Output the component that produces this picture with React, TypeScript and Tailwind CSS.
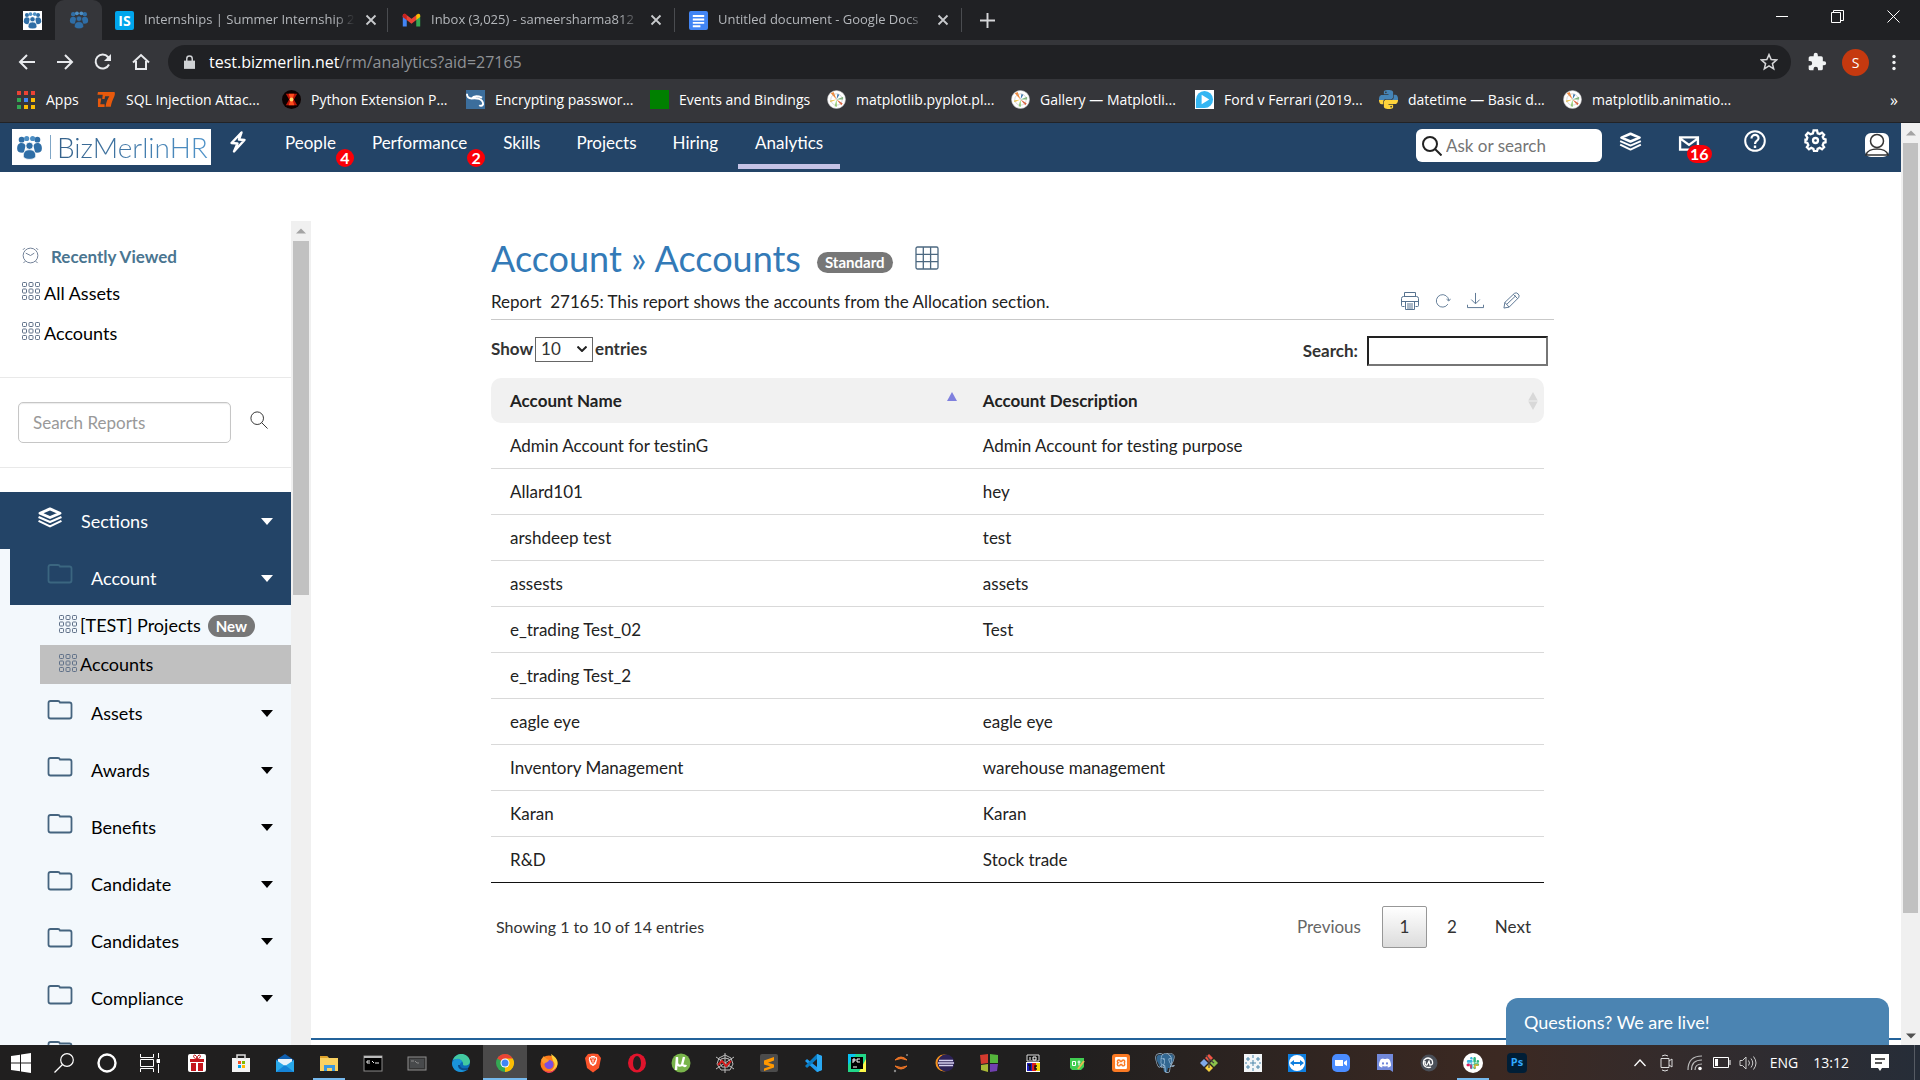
import React from "react";
import { SiPostgresql, SiDiscord, SiBrave, SiXampp, SiPython } from "react-icons/si";
import { FaSlack } from "react-icons/fa";

type IconProps = { className?: string };

/* ---------- brand marks ---------- */

function PeopleMark({ className }: IconProps) {
  return (
    <svg viewBox="0 0 24 24" className={className} fill="#2f6ea6" aria-hidden="true">
      <circle cx="5" cy="5" r="2.6" />
      <circle cx="19" cy="5" r="2.6" />
      <circle cx="9.5" cy="4" r="2.3" fill="#4d8fc4" />
      <circle cx="14.8" cy="4" r="2.3" fill="#4d8fc4" />
      <path d="M1 13c0-3.500 1.600-5 4-5 2 0 3 1 3.500 2.500L7 16.500C3 17 1 15.500 1 13Z" />
      <path d="M23 13c0-3.500-1.600-5-4-5-2 0-3 1-3.500 2.500L17 16.500c4 .5 6-1 6-3.500Z" />
      <circle cx="12" cy="10.500" r="3.200" stroke="currentColor" strokeWidth=".7" />
      <path d="M6.500 19.500c0-4 2-5.500 5.500-5.500s5.500 1.500 5.500 5.500c0 2-2.500 3-5.500 3s-5.500-1-5.500-3Z" stroke="currentColor" strokeWidth=".7" />
    </svg>
  );
}

function GmailMark({ className }: IconProps) {
  return (
    <svg viewBox="0 0 24 24" className={className} aria-hidden="true">
      <path d="M1 6v13.500h5V10L1 6Z" fill="#4285f4" />
      <path d="M23 6v13.500h-5V10l5-4Z" fill="#34a853" />
      <path d="M1 6c0-2 2-3 3.500-2L12 9.700 19.500 4 18 11.500l-6 4.500-6-4.500-5-4V6Z" fill="#ea4335" />
      <path d="M18 5v6.500l5-4V6c0-2-2-3-3.500-2L18 5Z" fill="#fbbc04" />
      <path d="M1 7.500 6 11.500V5L4.500 4C3 3 1 4 1 6v1.500Z" fill="#c5221f" />
    </svg>
  );
}

function DocsMark({ className }: IconProps) {
  return (
    <svg viewBox="0 0 20 20" className={className} aria-hidden="true">
      <rect width="20" height="20" rx="2" fill="#4285f4" />
      <path d="M4 5.200h12M4 9h12M4 12.500h12M4 16h8" stroke="#fff" strokeWidth="2" />
    </svg>
  );
}

function MatplotMark({ className }: IconProps) {
  return (
    <svg viewBox="0 0 20 20" className={className} aria-hidden="true">
      <circle cx="10" cy="10" r="9.500" fill="#fff" stroke="#bbb" strokeWidth=".6" />
      <path d="M10 10 4 3.500l3-1.500Z" fill="#f08a3c" />
      <path d="m10 10 7-3v3Z" fill="#7db87a" />
      <path d="m10 10 5 6 1.500-2Z" fill="#e0603a" />
      <path d="m10 10-7 1 .5 2Z" fill="#f1c64c" />
      <path d="m10 10-2 7 2.500.500Z" fill="#8fce6a" />
      <path d="m10 10 1-6 2 1Z" fill="#3a78b0" />
      <circle cx="10" cy="10" r="6" fill="none" stroke="#aaa" strokeWidth=".5" />
    </svg>
  );
}

function SqlMark({ className }: IconProps) {
  return (
    <svg viewBox="0 0 20 20" className={className} fill="#e8590c" aria-hidden="true">
      <path d="M1 2h17.500c1.500 4-2.500 7-4 15.500H9C9.500 13 11 9.500 13 6.500H8.500L8 9.500H5.500L6 5H.5Z" />
      <path d="M1 9h3.500l-1 6H8v3H1Z" />
    </svg>
  );
}

function PyExtMark({ className }: IconProps) {
  return (
    <svg viewBox="0 0 20 20" className={className} aria-hidden="true">
      <circle cx="10" cy="10" r="10" fill="#0c0000" />
      <path d="M4 4h12l-3.500 6L16 16H4l3.500-6Z" fill="#b71408" />
      <path d="M7 4h6l-2 6 2 6H7l2-6Z" fill="#ff4a1c" />
      <circle cx="10" cy="10" r="2" fill="#ffd56b" />
    </svg>
  );
}

function EncryptMark({ className }: IconProps) {
  return (
    <svg viewBox="0 0 20 20" className={className} fill="none" stroke="#fff" aria-hidden="true">
      <rect width="20" height="20" fill="#3c6e9c" stroke="none" />
      <path d="M1 4c0 4 2 5 5 5 2-3 6-3 11-1M5 9c6-1 13 0 13 6-1 2-3 2-4 1" strokeWidth="2" />
    </svg>
  );
}

function PlayMark({ className }: IconProps) {
  return (
    <svg viewBox="0 0 20 20" className={className} aria-hidden="true">
      <rect width="20" height="20" fill="#fff" />
      <path d="M1 10a9 9 0 0 1 9-9 9 9 0 1 1 0 18H1Z" fill="#35b6f2" />
      <path d="M7 5v10l8-5Z" fill="#fff" />
    </svg>
  );
}

/* ---------- application icons ---------- */

function Layers({ className }: IconProps) {
  return (
    <svg viewBox="0 0 26 22" className={className} fill="none" stroke="currentColor" strokeWidth="2" strokeLinejoin="round" aria-hidden="true">
      <path d="M13 2 2.500 6.500l10.500 4.500 10.500-4.500Z" strokeWidth="3" />
      <path d="m1 10.500 12 5.300 12-5.300M1 14.500l12 5.800 12-5.800" strokeWidth="2.200" />
    </svg>
  );
}

function Nine({ className }: IconProps) {
  const spots = [1, 7.500, 14];
  return (
    <svg viewBox="0 0 18 18" className={className} fill="none" stroke="#5f7088" aria-hidden="true">
      {spots.map((y) => spots.map((x) => <rect key={`${x}-${y}`} x={x - 0.5} y={y - 0.5} width="4" height="4" rx=".8" />))}
    </svg>
  );
}

function Folder({ className }: IconProps) {
  return (
    <svg viewBox="0 0 26 20" className={className} fill="none" stroke="currentColor" strokeWidth="1.800" aria-hidden="true">
      <path d="M1.500 16.500V3q0-2 2-2H11q1.500 0 2 1.500h9.500q2 0 2 2v12q0 2-2 2h-19q-2 0-2-2Z" />
    </svg>
  );
}

function Caret({ className }: IconProps) {
  return (
    <svg viewBox="0 0 12 7" className={className} fill="currentColor" aria-hidden="true">
      <path d="M0 0h12L6 7Z" />
    </svg>
  );
}

function Magnifier({ className }: IconProps) {
  return (
    <svg viewBox="0 0 20 20" className={className} fill="none" stroke="currentColor" aria-hidden="true">
      <circle cx="8" cy="8" r="7" />
      <path d="m13 13 6.500 6.500" />
    </svg>
  );
}

/* ---------- browser ---------- */

function Tab({ icon, title }: { icon: React.ReactNode; title: string }) {
  return (
    <div className="flex h-10 w-[285px] shrink-0 items-center gap-[10px] pl-[13px] pr-3">
      {icon}
      <span className="flex-1 whitespace-nowrap text-[13px] text-[#b4b7bb] mask-r-from-90%">{title}</span>
      <button aria-label="Close tab" className="text-[#c8cacd]">
        <svg viewBox="0 0 12 12" className="size-3" fill="none" stroke="currentColor" strokeWidth="1.800"><path d="m1.500 1.500 9 9m0-9-9 9" /></svg>
      </button>
    </div>
  );
}

function TabRule() {
  return <span className="mr-px h-6 w-px shrink-0 bg-[#4a4c50]" />;
}

const bookmarks: { text: string; icon: React.ReactNode; width: string }[] = [
  { text: "SQL Injection Attac...", icon: <SqlMark className="size-[19px]" />, width: "w-[185px]" },
  { text: "Python Extension P...", icon: <PyExtMark className="size-[19px]" />, width: "w-[184px]" },
  { text: "Encrypting passwor...", icon: <EncryptMark className="size-[19px]" />, width: "w-[184px]" },
  { text: "Events and Bindings", icon: <span className="block size-[19px] bg-[#008000]" />, width: "w-[177px]" },
  { text: "matplotlib.pyplot.pl...", icon: <MatplotMark className="size-[19px]" />, width: "w-[184px]" },
  { text: "Gallery — Matplotli...", icon: <MatplotMark className="size-[19px]" />, width: "w-[184px]" },
  { text: "Ford v Ferrari (2019...", icon: <PlayMark className="size-[19px]" />, width: "w-[184px]" },
  {
    text: "datetime — Basic d...",
    icon: (
      <svg viewBox="0 0 24 24" className="size-[19px]" aria-hidden="true">
        <defs><linearGradient id="py" x2="0" y2="1"><stop offset=".5" stopColor="#4584b6" /><stop offset=".5" stopColor="#ffd43b" /></linearGradient></defs>
        <SiPython size={24} fill="url(#py)" />
      </svg>
    ),
    width: "w-[184px]",
  },
  { text: "matplotlib.animatio...", icon: <MatplotMark className="size-[19px]" />, width: "w-[184px]" },
];

function Browser() {
  const appColours = ["#ea4335", "#ea4335", "#ea4335", "#34a853", "#4285f4", "#fbbc04", "#34a853", "#fbbc04", "#fbbc04"];
  return (
    <div className="shrink-0 bg-[#35363a] font-['Open_Sans',sans-serif] text-white">
      <div className="flex h-10 items-center bg-[#202124]">
        <div className="flex h-10 w-[55px] shrink-0 items-center pl-[23px]">
          <span className="bg-white text-white"><PeopleMark className="size-[19px]" /></span>
        </div>
        <div className="flex h-10 w-[47px] shrink-0 items-center justify-center rounded-t-[9px] bg-[#35363a] text-[#35363a]">
          <PeopleMark className="size-[20px]" />
        </div>
        <Tab icon={<span className="flex size-[19px] shrink-0 items-center justify-center rounded-[2px] bg-[#00a5ec] text-[14px] font-bold text-white">IS</span>} title="Internships | Summer Internship 2" />
        <TabRule />
        <Tab icon={<GmailMark className="size-[19px] shrink-0" />} title="Inbox (3,025) - sameersharma812" />
        <TabRule />
        <Tab icon={<DocsMark className="size-[19px] shrink-0" />} title="Untitled document - Google Docs" />
        <TabRule />
        <button aria-label="New tab" className="ml-[17px] text-[#d5d6d8]">
          <svg viewBox="0 0 14 14" className="size-[15px]" stroke="currentColor" strokeWidth="1.800"><path d="M7 0v14M0 7h14" /></svg>
        </button>
        <div className="ml-auto flex items-center gap-[43px] pr-5 pb-2 text-white">
          <button aria-label="Minimize"><svg viewBox="0 0 12 12" className="size-3" stroke="currentColor"><path d="M0 6.500h12" /></svg></button>
          <button aria-label="Restore"><svg viewBox="0 0 13 13" className="size-[13px]" fill="none" stroke="currentColor"><path d="M.5 2.500h9v10h-9ZM2.500 2.500v-2h10v10h-3" /></svg></button>
          <button aria-label="Close"><svg viewBox="0 0 13 13" className="size-[13px]" stroke="currentColor"><path d="m.5.5 12 12m0-12-12 12" /></svg></button>
        </div>
      </div>

      <div className="flex h-11 items-center pr-[23px]">
        <div className="flex items-center gap-5 pl-[18px] text-[#e8eaed]">
          <button aria-label="Back"><svg viewBox="0 0 18 18" className="size-[18px]" fill="none" stroke="currentColor" strokeWidth="2"><path d="M17 9H2M9 2 2 9l7 7" /></svg></button>
          <button aria-label="Forward"><svg viewBox="0 0 18 18" className="size-[18px]" fill="none" stroke="currentColor" strokeWidth="2"><path d="M1 9h15M9 2l7 7-7 7" /></svg></button>
          <button aria-label="Reload"><svg viewBox="0 0 18 18" className="size-[18px]" fill="none" stroke="currentColor" strokeWidth="2"><path d="M15 11.500A7 7 0 1 1 14 4l1.500 1.700" /><path d="M17 1v7h-7Z" fill="currentColor" stroke="none" /></svg></button>
          <button aria-label="Home"><svg viewBox="0 0 18 18" className="size-[18px]" fill="none" stroke="currentColor" strokeWidth="2"><path d="M1 9.500 9 2l8 7.500M4 8v8h10V8" /></svg></button>
        </div>
        <div className="ml-[18px] flex h-[34px] flex-1 items-center rounded-full bg-[#202124] pl-4 pr-[13px]">
          <svg viewBox="0 0 12 15" className="mr-[14px] h-[14px] w-[11px]" fill="#d0d2d5" aria-hidden="true"><path d="M0 6h12v9H0Z" /><path d="M3 7V4a3 3 0 0 1 6 0v3" fill="none" stroke="#d0d2d5" strokeWidth="1.600" /></svg>
          <span className="flex-1 whitespace-nowrap text-[16px] text-white">test.bizmerlin.net<span className="text-[#8f9296]">/rm/analytics?aid=27165</span></span>
          <button aria-label="Bookmark"><svg viewBox="0 0 20 20" className="size-[18px]" fill="none" stroke="#d5d6d8" strokeWidth="1.700"><path d="m10 1.800 2.400 5.500 6 .5-4.600 4 1.400 5.800-5.200-3.200-5.200 3.200 1.400-5.800-4.600-4 6-.5Z" /></svg></button>
        </div>
        <button aria-label="Extensions" className="ml-4"><svg viewBox="0 0 24 24" className="size-5" fill="#f1f3f4"><path d="M20.500 11H19V7a2 2 0 0 0-2-2h-4V3.500a2.500 2.500 0 0 0-5 0V5H4a2 2 0 0 0-2 2v3.800h1.500a2.700 2.700 0 0 1 0 5.400H2V20a2 2 0 0 0 2 2h3.800v-1.500a2.700 2.700 0 0 1 5.400 0V22H17a2 2 0 0 0 2-2v-4h1.500a2.500 2.500 0 0 0 0-5Z" /></svg></button>
        <button className="ml-[15px] flex size-[27px] items-center justify-center rounded-full bg-[#c5390f] text-[14px]">S</button>
        <button aria-label="Menu" className="ml-[22px]"><svg viewBox="0 0 6 20" className="h-[17px] w-[6px]" fill="#f1f3f4"><circle cx="3" cy="3" r="2" /><circle cx="3" cy="10" r="2" /><circle cx="3" cy="17" r="2" /></svg></button>
      </div>

      <div className="flex h-[39px] items-center border-b border-[#222326] pb-[7px] pl-[17px] pr-[22px] text-[14px]">
        <a href="#apps" className="flex w-20 shrink-0 items-center gap-[11px]">
          <svg viewBox="0 0 18 18" className="size-[18px]" aria-hidden="true">{appColours.map((c, i) => <rect key={i} x={(i % 3) * 7} y={Math.floor(i / 3) * 7} width="4" height="4" fill={c} />)}</svg>
          <span>Apps</span>
        </a>
        {bookmarks.map((b) => (
          <a key={b.text} href="#bookmark" className={`flex shrink-0 items-center gap-[10px] whitespace-nowrap ${b.width}`}>
            {b.icon}
            <span>{b.text}</span>
          </a>
        ))}
        <button aria-label="More bookmarks" className="ml-auto text-[16px]">»</button>
      </div>
    </div>
  );
}

/* ---------- header ---------- */

const badge = "absolute flex h-[18px] min-w-[18px] items-center justify-center rounded-full bg-[#fb0007] px-[3px] text-[16px] font-bold leading-none text-white";

function Header() {
  return (
    <header className="flex h-[49px] shrink-0 items-start bg-[#234467] text-[17px] text-white">
      <a href="#home" className="ml-3 mt-[6px] flex h-9 w-[199px] shrink-0 items-center bg-white pl-1">
        <PeopleMark className="size-[27px]" />
        <span className="ml-[7px] h-6 w-px bg-[#7fa6c6]" />
        <span className="ml-[6px] bg-linear-to-r from-[#35618a] to-[#4f93c9] bg-clip-text text-[28px] font-light leading-9 text-transparent">BizMerlinHR</span>
      </a>
      <button aria-label="Quick actions" className="ml-[18px] mt-2">
        <svg viewBox="0 0 18 22" className="h-[22px] w-[18px]" fill="none" stroke="#fff" strokeWidth="2.400" strokeLinejoin="round"><path d="M12.500 1.500 2.500 12l6 .5L5 20.500 15.500 9l-5.500-.5Z" /></svg>
      </button>
      <nav className="ml-5 flex h-[46px] items-stretch leading-10">
        <a href="#people" className="relative px-[18px]">People<span className={`${badge} right-0 top-[26px]`}>4</span></a>
        <a href="#performance" className="relative px-[18px]">Performance<span className={`${badge} right-0 top-[26px]`}>2</span></a>
        <a href="#skills" className="px-[18px]">Skills</a>
        <a href="#projects" className="px-[18px]">Projects</a>
        <a href="#hiring" className="px-[18px]">Hiring</a>
        <a href="#analytics" className="ml-[2px] border-b-[5px] border-[#c5c3e6] px-[17px]">Analytics</a>
      </nav>
      <label className="ml-auto mt-[6px] flex h-[33px] w-[186px] items-center rounded-[6px] bg-white pl-[6px]">
        <Magnifier className="size-5 shrink-0 stroke-2 text-[#222]" />
        <input aria-label="Ask or search" placeholder="Ask or search" className="ml-1 w-full min-w-0 bg-transparent placeholder:text-[#757575] focus:outline-none" />
      </label>
      <div className="mr-3 flex items-start">
        <button aria-label="Layers" className="ml-[17px] mt-[9px]"><Layers className="h-[19px] w-[23px]" /></button>
        <button aria-label="Mail" className="relative ml-[36px] mt-[13px]">
          <svg viewBox="0 0 22 16" className="h-[15px] w-[22px]" fill="none" stroke="#fff" strokeWidth="2.500"><path d="M1.500 1.500h19v13h-19Zm0 1L11 9.500l9.500-7" /></svg>
          <span className={`${badge} left-[9px] top-[9px]`}>16</span>
        </button>
        <button aria-label="Help" className="ml-[44px] mt-[7px]">
          <svg viewBox="0 0 22 22" className="size-[22px]" fill="none" stroke="#fff" strokeWidth="2"><circle cx="11" cy="11" r="9.800" /><path d="M7.500 8.500c0-5 7.500-4.500 7 0-.2 2.500-3.500 2-3.500 5.500" strokeWidth="2.200" /><path d="M11 15.500V18" strokeWidth="2.400" /></svg>
        </button>
        <button aria-label="Settings" className="ml-[38px] mt-[6px]">
          <svg viewBox="0 0 24 24" className="size-[23px]" fill="none" stroke="#fff" strokeWidth="2.400"><path d="m10 1.500-.7 3-2.500 1-2.600-1.500L2 6.500l1.500 2.600L2.800 11H1.500v3l2 .5 1 2.400L3 19l2.200 2.200 2.400-1.500 2.200 1 .6 2.300h3.200l.6-2.300 2.200-1 2.400 1.500L21 19l-1.500-2.200 1-2.400 2-.4v-3.200l-2-.5-1-2.200L21 6l-2.200-2.200-2.500 1.500-2-.8-.7-3Z" /><circle cx="12" cy="12" r="2.600" /></svg>
        </button>
        <button aria-label="Profile" className="ml-[38px] mt-[10px]">
          <svg viewBox="0 0 24 24" className="size-6"><rect width="24" height="24" rx="6" fill="#fff" /><circle cx="12" cy="8" r="6.500" fill="none" stroke="#333" strokeWidth="1.500" /><path d="M1 22c2-8 20-8 22 0Z" fill="none" stroke="#333" strokeWidth="1.500" /></svg>
        </button>
      </div>
    </header>
  );
}

/* ---------- sidebar ---------- */

const folders = ["Assets", "Awards", "Benefits", "Candidate", "Candidates", "Compliance"];

function ScrollRail({ side }: { side?: boolean }) {
  return (
    <div className={side ? "flex w-5 shrink-0 flex-col items-center bg-[#f0f0f0]" : "flex w-[19px] shrink-0 flex-col items-center bg-[#f0f0f0]"} aria-hidden="true">
      <svg viewBox="0 0 10 5" className="my-[7px] h-[6px] w-[10px] shrink-0" fill="#a3a3a3"><path d="M5 0 10 5H0Z" /></svg>
      <div className={side ? "h-[43%] w-4 bg-[#c1c1c1]" : "h-[83.5%] w-[15px] bg-[#c1c1c1]"} />
      {!side && <svg viewBox="0 0 10 5" className="mb-[6px] mt-auto h-[6px] w-[10px]" fill="#505050"><path d="M0 0h10L5 5Z" /></svg>}
    </div>
  );
}

function Sidebar() {
  return (
    <aside className="mt-[49px] flex w-[311px] shrink-0 overflow-hidden text-[18px] text-black">
      <div className="flex min-w-0 flex-1 flex-col overflow-hidden">
        <section className="h-[157px] shrink-0 border-b border-[#e9e9e9] pl-[22px] pt-[22px]">
          <h2 className="flex h-7 items-center gap-3 text-[17px] font-bold text-[#4a7590]">
            <svg viewBox="0 0 18 18" className="mb-1 size-[17px]" fill="none" stroke="#6b7b93"><circle cx="9" cy="9" r="7.800" /><path d="M4 6.500 9 9l4-2.500M1 3 3 1m12 0 2 2M3.500 15 1.500 17m13-2 2 2" /></svg>
            Recently Viewed
          </h2>
          <a href="#all-assets" className="mt-[2px] flex h-10 items-center gap-1"><Nine className="mb-1 size-[18px]" />All Assets</a>
          <a href="#accounts" className="flex h-10 items-center gap-1"><Nine className="mb-1 size-[18px]" />Accounts</a>
        </section>
        <form className="flex h-[90px] shrink-0 items-center border-b border-[#e9e9e9] pl-[18px]">
          <input aria-label="Search Reports" placeholder="Search Reports" className="h-[41px] w-[213px] rounded-[5px] border border-[#c6c6c6] px-[14px] text-[17px] shadow-[inset_0_1px_1px_rgba(0,0,0,0.08)] placeholder:text-[#999]" />
          <button type="button" aria-label="Search" className="mb-[6px] ml-[19px]"><Magnifier className="size-[18px] text-[#222]" /></button>
        </form>
        <div className="mt-6 flex min-h-0 flex-1 flex-col bg-[#f3f8fc]">
          <button className="flex h-[57px] shrink-0 items-center bg-[#234467] pl-[37px] pr-[18px] pt-[2px] text-white">
            <Layers className="mb-2 h-[21px] w-[26px]" /><span className="ml-[18px]">Sections</span><Caret className="ml-auto h-[7px] w-3" />
          </button>
          <button className="ml-[10px] flex h-14 shrink-0 items-center bg-[#234467] pl-[37px] pr-[18px] pt-[2px] text-white">
            <Folder className="mb-2 h-5 w-[26px] text-[#3b6680]" /><span className="ml-[18px]">Account</span><Caret className="ml-auto h-[7px] w-3" />
          </button>
          <a href="#test-projects" className="flex h-10 shrink-0 items-center gap-[3px] pl-[59px]">
            <Nine className="mb-[2px] size-[18px]" />[TEST] Projects
            <span className="ml-1 mt-[2px] flex h-[22px] items-center rounded-full bg-[#777] px-2 text-[15px] font-bold text-white">New</span>
          </a>
          <a href="#accounts" className="ml-10 flex h-[39px] shrink-0 items-center gap-[3px] bg-[#c0c0c0] pl-[19px]"><Nine className="mb-1 size-[18px]" />Accounts</a>
          {folders.map((f) => (
            <button key={f} className="flex h-[57px] shrink-0 items-center pl-[47px] pr-[18px] pt-[2px]">
              <Folder className="mb-2 h-5 w-[26px] text-[#45647f]" /><span className="ml-[18px]">{f}</span><Caret className="ml-auto h-[7px] w-3" />
            </button>
          ))}
          <button aria-label="More sections" className="flex h-[57px] shrink-0 items-center pl-[47px]"><Folder className="mb-2 h-5 w-[26px] text-[#45647f]" /></button>
        </div>
      </div>
      <ScrollRail side />
    </aside>
  );
}

/* ---------- report ---------- */

const rows: [string, string][] = [
  ["Admin Account for testinG", "Admin Account for testing purpose"],
  ["Allard101", "hey"],
  ["arshdeep test", "test"],
  ["assests", "assets"],
  ["e_trading Test_02", "Test"],
  ["e_trading Test_2", ""],
  ["eagle eye", "eagle eye"],
  ["Inventory Management", "warehouse management"],
  ["Karan", "Karan"],
  ["R&D", "Stock trade"],
];

function Report() {
  return (
    <main className="relative flex min-w-0 flex-1 flex-col pl-[180px] pr-[347px] text-[17px] text-[#222] [font-variant-ligatures:none]">
      <div className="mt-[60px] flex h-[52px] items-center">
        <h1 className="text-[36px] leading-[50px] text-[#337ab7]">Account » Accounts</h1>
        <span className="ml-4 mt-[9px] flex h-[21px] items-center rounded-full bg-[#777] px-2 text-[15px] font-bold text-white">Standard</span>
        <button aria-label="Grid view" className="ml-[22px]">
          <svg viewBox="0 0 24 24" className="size-6" fill="none" stroke="#4c6880" strokeWidth="1.300"><rect x="1" y="1" width="22" height="22" rx="1.500" /><path d="M1 8.300h22M1 15.600h22M8.300 1v22M15.600 1v22" /></svg>
        </button>
      </div>
      <div className="flex h-[36px] items-center border-b border-[#c9c9c9] pr-[34px]">
        <p className="whitespace-pre">Report  27165: This report shows the accounts from the Allocation section.</p>
        <div className="ml-auto flex items-center gap-4 pb-[2px] text-[#56728f]">
          <button aria-label="Print"><svg viewBox="0 0 18 18" className="size-[18px]" fill="none" stroke="currentColor"><path d="M3.500 4.500v-4h11v4M3.500 14.500h-2q-1 0-1-1v-7q0-2 2-2h13q2 0 2 2v7q0 1-1 1h-2M1 9.500h16M4.500 9.500h9v8h-9ZM6 12h6m-6 2h6m-6 2h6" /></svg></button>
          <button aria-label="Refresh"><svg viewBox="0 0 18 18" className="size-4" fill="none" stroke="currentColor"><path d="M15.500 8.500a7 7 0 1 0-1 4M13 7l2.500 2L17.500 6.500" /></svg></button>
          <button aria-label="Download"><svg viewBox="0 0 18 18" className="size-[17px]" fill="none" stroke="currentColor"><path d="M9 1v11M4.500 8 9 12.500 13.500 8M.5 13.500v3h17v-3" /></svg></button>
          <button aria-label="Edit" className="ml-[3px]"><svg viewBox="0 0 18 18" className="size-[17px]" fill="none" stroke="currentColor"><path d="m1 17 1-6L12 1.500q2-1.500 4 .5t.5 4L6.500 16ZM2 11l4.500 5M11 2.500l4.500 4.500M4 13 13.500 4" /></svg></button>
        </div>
      </div>

      <div className="mt-4 mr-[6px] flex items-start font-bold text-[#333]">
        <label className="flex h-[26px] items-center gap-[2px]">
          Show
          <span className="relative">
            <select defaultValue="10" className="block h-[25px] w-[58px] appearance-none border border-[#666] bg-white pb-[2px] pl-[5px] font-normal leading-none"><option>10</option><option>25</option></select>
            <svg viewBox="0 0 10 6" className="pointer-events-none absolute right-[6px] top-[9px] h-[6px] w-[10px]" fill="none" stroke="#222" strokeWidth="2"><path d="m.5.5 4.500 4.500L9.500.5" /></svg>
          </span>
          entries
        </label>
        <label className="ml-auto flex h-[30px] items-center gap-[9px]">Search:<input type="search" className="h-[30px] w-[181px] border-2 border-b-[#767676] border-l-[#222] border-r-[#767676] border-t-[#222] px-1 font-normal" /></label>
      </div>

      <div className="mr-[10px] mt-3">
        <table className="w-full table-fixed border-separate border-spacing-0 border-b border-[#111] text-left">
          <colgroup><col className="w-[45%]" /><col /></colgroup>
          <thead>
            <tr className="h-[45px]">
              <th className="rounded-l-[10px] bg-[#f1f1f1] pl-[19px] pr-2 font-bold">
                <div className="flex items-center">Account Name<svg viewBox="0 0 10 9" className="mb-[9px] ml-auto h-[9px] w-[10px]" fill="#7f80de"><path d="m5 0 5 9H0Z" /></svg></div>
              </th>
              <th className="rounded-r-[10px] bg-[#f1f1f1] pl-[18px] pr-[6px] font-bold">
                <div className="flex items-center">Account Description<svg viewBox="0 0 10 19" className="ml-auto h-[18px] w-[10px]" fill="#d8d8d8"><path d="m5 0 5 9H0ZM0 10h10l-5 9Z" /></svg></div>
              </th>
            </tr>
          </thead>
          <tbody>
            {rows.map(([name, text], i) => (
              <tr key={name} className={i < 9 ? "h-[46px]" : "h-[45px]"}>
                <td className={i < 9 ? "border-b border-[#d9d9d9] pl-[19px]" : "pl-[19px]"}>{name}</td>
                <td className={i < 9 ? "border-b border-[#d9d9d9] pl-[18px]" : "pl-[18px]"}>{text}</td>
              </tr>
            ))}
          </tbody>
        </table>
        <div className="mt-[23px] flex h-[42px] items-center pl-[5px] pr-[13px] text-[#333]">
          <span className="text-[16px]">Showing 1 to 10 of 14 entries</span>
          <nav className="ml-auto flex items-center">
            <button className="text-[#666]">Previous</button>
            <button className="ml-[21px] h-[42px] w-[45px] rounded-[2px] border border-[#979797] bg-linear-to-b from-white to-[#dcdcdc]">1</button>
            <button className="ml-5">2</button>
            <button className="ml-[38px]">Next</button>
          </nav>
        </div>
      </div>
      <div className="absolute bottom-[5px] left-0 right-0 h-[2px] bg-[#23629a]" />
      <button className="absolute bottom-0 right-3 h-[47px] w-[383px] rounded-t-[12px] bg-[#4b84b2] pl-[18px] pt-[2px] text-left text-[18px] text-white">Questions? We are live!</button>
    </main>
  );
}

/* ---------- taskbar ---------- */

const S = ({ children }: { children: React.ReactNode }) => (
  <svg viewBox="0 0 20 20" className="size-5" fill="none" aria-hidden="true">{children}</svg>
);

const taskIcons: { name: string; icon: React.ReactNode; state?: "open" | "active" }[] = [
  { name: "Rewards", icon: <S><rect x="1" y="1" width="18" height="18" rx="2" fill="#fff" /><path d="M3 6h14v3H3ZM4 10h5v8H4ZM11 10h5v8h-5Z" fill="#c4161c" /><path d="M10 6C7 6 5 2 8 2q2 1 2 4Zm0 0c3 0 5-4 2-4q-2 1-2 4Z" stroke="#c4161c" /></S> },
  { name: "Store", icon: <S><path d="M1 5h18v14H1Z" fill="#f3f3f3" /><path d="M6 6V2h8v4" stroke="#ddd" strokeWidth="1.500" /><path d="M7 8h3v3H7Z" fill="#f25022" /><path d="M11 8h3v3h-3Z" fill="#7fba00" /><path d="M7 12h3v3H7Z" fill="#00a4ef" /><path d="M11 12h3v3h-3Z" fill="#ffb900" /></S> },
  { name: "Mail", icon: <S><path d="M1 7 10 1l9 6v12H1Z" fill="#0f5fb0" /><path d="M3 6h14v8H3Z" fill="#e8f3fb" /><path d="M1 7v12h18V7l-9 6Z" fill="#29a9ea" /><path d="m1 19 9-7 9 7Z" fill="#1583d6" /></S> },
  { name: "Files", state: "open", icon: <S><path d="M1 3h7l2 2h9v13H1Z" fill="#f9d161" /><path d="M1 3h7l1 2H1Z" fill="#e0a32b" /><path d="M5 18v-6h11v6h-3v-3H8v3Z" fill="#3a97de" /></S> },
  { name: "Command Prompt", icon: <S><rect x="1" y="3" width="18" height="15" fill="#000" stroke="#8b8b8b" /><path d="M1 4h18" stroke="#bbb" strokeWidth="2" /><path d="M4 8h3M4 8v2h3M9 8l2 2M12 10h4" stroke="#eee" /></S> },
  { name: "Console", icon: <S><rect x="1" y="4" width="18" height="13" fill="#333" stroke="#8f8f8f" /><path d="M3 6h14v9H3Z" fill="#484a4c" /><path d="M4 8h3m1 0 2 2h2" stroke="#888" /></S> },
  { name: "Edge", icon: <S><circle cx="10" cy="10" r="9" fill="#0c6cb8" /><path d="M2 7C5-1 17-1 19 8c0 5-5 5-7 4 1-4-4-7-10-5Z" fill="#43c9a0" /><path d="M1 10c2-6 10-5 10-1-3 1-4 8 5 8C8 22 1 17 1 10Z" fill="#1a93da" /><path d="M8 12c0 4 4 5 9 4" stroke="#0b4b8c" strokeWidth="2" /></S> },
  { name: "Chrome", state: "active", icon: <S><circle cx="10" cy="10" r="9" fill="#34a853" /><path d="M2.200 5.500A9 9 0 0 1 17.800 5.500L10 10Z" fill="#ea4335" /><path d="M17.800 5.500A9 9 0 0 1 10 19l0-9V5.500Z" fill="#fbbc04" /><circle cx="10" cy="10" r="4.500" fill="#fff" /><circle cx="10" cy="10" r="3.500" fill="#4285f4" /></S> },
  { name: "Firefox", icon: <S><circle cx="10" cy="11" r="8.500" fill="#ff7b1c" /><path d="M12 1c5 3 8 7 6 12-2 4-5 6-8 6 6-3 7-8 4-11Z" fill="#ffce3a" /><circle cx="10" cy="11.500" r="4.500" fill="#7a4ee0" /><path d="M2 7c1-2 2-3 3-4 1 2 3 3 5 4-1 3-4 2-5 4Z" fill="#ff9a2e" /><path d="M2 14c3 6 12 6 15 0-1 5-5 6-8 6-3-1-6-3-7-6Z" fill="#ec3b55" /></S> },
  { name: "Brave", icon: <S><path d="m5 1 5-.5L15 1l3 4-2 10-6 4.500L4 15 2 5Z" fill="#fb542b" /><SiBrave x="5" y="3" size={10} color="#fff" /></S> },
  { name: "Opera", icon: <S><ellipse cx="10" cy="10" rx="9" ry="9.500" fill="#e0142c" /><ellipse cx="10" cy="10" rx="4" ry="7" fill="#231f20" /></S> },
  { name: "uTorrent", icon: <S><circle cx="10" cy="10" r="9.500" fill="#79b44b" /><path d="M6 4 5 17M6 5v5q1 4 5 2l2-8m-1 8q2 2 3 0" stroke="#fff" strokeWidth="2.400" /></S> },
  { name: "Spyder", icon: <S><path d="m10 2 6 3 2 6-3 6H6l-4-6 2-6ZM10 0v20M1 4l18 12M19 4 1 16M6 6l4-1 4 1 1 4-2 4H7l-2-4Z" stroke="#bdbdbd" /><path d="m3 12 4-4 4 5 5-5" stroke="#d81e1e" strokeWidth="2" /></S> },
  { name: "Sublime Text", icon: <S><rect x="1" y="1" width="18" height="18" rx="2" fill="#4b4b4b" /><path d="M15 4 5 7.500v3.700L15 7.500ZM5 9v2.500l10 3V11.500L5 8.500ZM15 12 5 15.500V18l10-3.500Z" fill="#ff9800" /></S> },
  { name: "VS Code", icon: <S><path d="m14 1 5 2v14l-5 2L2 8l2-2 10 8Z" fill="#1f9cf0" /><path d="M14 1v5L4 15l-2-2Z" fill="#0a7cc4" /><path d="m14 1 5 2v14l-5 2Z" fill="#2aa9f3" /></S> },
  { name: "PyCharm", icon: <S><path d="M1 1h18v18H1Z" fill="#21d789" /><path d="M12 19h7V6Z" fill="#fcf84a" /><path d="M1 1h8L1 12Z" fill="#07c3f2" /><path d="M4 4h12v12H4Z" fill="#000" /><path d="M6 14h4M6 10V6h2v2H6m7-2h-3v3h3" stroke="#fff" /></S> },
  { name: "Jupyter", icon: <S><path d="M4 7q6-6 12 0-6-3-12 0ZM4 13q6 6 12 0-6 3-12 0Z" fill="#f37726" stroke="#f37726" /><circle cx="16" cy="2" r="1" fill="#888" /><circle cx="4" cy="18" r="1.200" fill="#888" /></S> },
  { name: "Eclipse", icon: <S><circle cx="9" cy="10" r="8.500" fill="#f7941e" /><circle cx="11" cy="10" r="8.500" fill="#2c2255" /><path d="M4 7.500h14M3 10h16M4 12.500h14" stroke="#d5d0ee" strokeWidth="1.400" /></S> },
  { name: "Blocks", icon: <S><path d="m1 2 8-1v9l-7 1Z" fill="#d43a2e" /><path d="m11 1 8 1v8h-8Z" fill="#55b53c" /><path d="m2 12 7-1v8l-7-2Z" fill="#a8b836" /><path d="M11 11h8l-1 7-7 1Z" fill="#7140b0" /></S> },
  { name: "Dosbox", icon: <S><path d="M4 2h12v6H4Z" fill="#111" stroke="#ddd" /><path d="M7 4v3m3-3h3v3h-3Z" stroke="#fff" /><path d="M3 9h14v10H3Z" fill="#fff" /><path d="M4 10h5v8H4Z" fill="#1d1dbe" /><path d="M9 10h4v8H9Z" fill="#e01b1b" /><path d="M13 10h4v8h-4Z" fill="#f4d90e" /><path d="M5 12h3m-1 0v5m7-4h-2v3h2" stroke="#111" strokeWidth="1.500" /></S> },
  { name: "Qt", icon: <S><path d="M3 5h14v9l-3 3H5l-2-2Z" fill="#41cd52" /><path d="M5.500 8.500h3v4h-3Zm6.500-1v5m-1.500-3.500h3" stroke="#fff" /><path d="m17 8-6 8" stroke="#e5b951" strokeWidth="2" /></S> },
  { name: "XAMPP", icon: <S><rect x="1" y="1" width="18" height="18" rx="3" fill="#fb7a24" /><SiXampp x="4" y="4" size={12} color="#fff" /></S> },
  { name: "PostgreSQL", icon: <S><path d="M2 8C0 2 4 1 7 2c3-2 5-1 6 0 5-2 7 1 5 6l-3 5v2h-2l-1 4H9l-1-6-3 1Z" fill="#336791" /><SiPostgresql x="0" y="0" size={20} color="#a9c8e2" /></S> },
  { name: "Git", icon: <S><path d="m10 1 4 4-4 4-4-4Z" fill="#f05545" /><path d="m15 6 4 4-4 4-4-4Z" fill="#8bc34a" /><path d="m5 6 4 4-4 4-4-4Z" fill="#7fa9e8" /><path d="m10 11 4 4-4 4-4-4Z" fill="#f4d03f" /><path d="m7 2 3 4v9M10 6l5 4" stroke="#444" strokeWidth="1.200" /></S> },
  { name: "Tableau", icon: <S><path d="M1 1h18v18H1Z" fill="#f3f6f8" /><path d="M10 7v6M7 10h6M5 4v4M3 6h4M15 4v4M13 6h4M5 12v4M3 14h4M15 12v4M13 14h4M10 2v3M10 15v3M2 10h2M16 10h2" stroke="#4b86ab" /></S> },
  { name: "TeamViewer", icon: <S><path d="M1 1h18v18H1Z" fill="#0e7fe0" /><circle cx="10" cy="10" r="8" fill="#fff" /><path d="m3 10 4-3v2h6V7l4 3-4 3v-2H7v2Z" fill="#0e7fe0" /></S> },
  { name: "Zoom", icon: <S><rect x="1" y="1" width="18" height="18" rx="5" fill="#4a8cff" /><path d="M4 7h8v6H5q-1 0-1-1ZM13 9l3-2v6l-3-2Z" fill="#fff" /></S> },
  { name: "Discord", icon: <S><path d="M2 1h16v18l-3-2H2Z" fill="#7289da" /><SiDiscord x="4" y="4" size={12} color="#fff" /></S> },
  { name: "Workplace", icon: <S><circle cx="10" cy="10" r="8.500" fill="#4a4f58" /><path d="M6 8q0 5 2 4l2-4 1 4q4 0 2-5-4-4-8 0-2 5 2 7 3 1 5 0" stroke="#fff" strokeWidth="1.300" /></S> },
  { name: "Slack", state: "open", icon: <span className="flex size-5 items-center justify-center rounded-full bg-white"><svg viewBox="0 0 14 14" className="size-[14px]" aria-hidden="true"><defs><linearGradient id="slk"><stop offset=".5" stopColor="#36b5e0" /><stop offset=".5" stopColor="#2eb67d" /></linearGradient></defs><FaSlack size={14} fill="url(#slk)" /><path d="M1 9.500h2v-1H2q-1 0-1 1M5 8.500v4" stroke="#e01e5a" strokeWidth="1.500" fill="none" /><path d="M8.500 9h4M9 9.500v3" stroke="#ecb22e" strokeWidth="1.500" /></svg></span> },
  { name: "Photoshop", icon: <span className="flex size-5 items-center justify-center rounded-[4px] bg-[#001e36] text-[11px] font-bold text-[#31a8ff]">Ps</span> },
];

function Taskbar() {
  return (
    <footer className="flex h-[35px] shrink-0 items-center bg-linear-to-r from-[#201f1f] from-55% via-[#3c2922] via-78% to-[#262d38] font-['Open_Sans',sans-serif] text-white">
      <button aria-label="Start" className="ml-[11px]"><svg viewBox="0 0 20 20" className="size-5" fill="#fff"><path d="m0 3 9-1.300V9.500H0ZM10 1.500 20 0v9.500H10ZM0 10.500h9v7.800L0 17ZM10 10.500h10V20l-10-1.500Z" /></svg></button>
      <button aria-label="Search" className="ml-[23px]"><svg viewBox="0 0 20 20" className="size-5" fill="none" stroke="#fff" strokeWidth="1.200"><circle cx="13" cy="7" r="6.300" /><path d="M8.500 11.500.5 19.500" /></svg></button>
      <button aria-label="Cortana" className="ml-[23px]"><svg viewBox="0 0 20 20" className="size-5" fill="none" stroke="#fff" strokeWidth="2.400"><circle cx="10" cy="10" r="8.500" /></svg></button>
      <button aria-label="Task view" className="ml-[23px]"><svg viewBox="0 0 20 20" className="size-5" fill="none" stroke="#fff"><path d="M.5 1v3.500h13V1M.5 6.500h13v7H.5ZM.5 19v-3.500h13V19M18.500 0v5m0 6v9" /><path d="M17 6.500h3v3h-3Z" fill="#fff" /></svg></button>
      <div className="ml-[15px] flex h-full items-stretch">
        {taskIcons.map((t) => (
          <button
            key={t.name}
            aria-label={t.name}
            className={
              t.state === "active"
                ? "flex w-11 items-center justify-center border-b-2 border-[#76b9ed] bg-[#4b4a4a] pt-[2px]"
                : "flex w-11 items-center justify-center px-[6px]"
            }
          >
            {t.state === "open" ? <span className="flex h-full w-8 items-center justify-center border-b-2 border-[#76b9ed] pt-[2px]">{t.icon}</span> : t.icon}
          </button>
        ))}
      </div>
      <div className="ml-auto flex items-center text-[14px]">
        <svg viewBox="0 0 12 8" className="w-3" fill="none" stroke="#fff" strokeWidth="1.300"><path d="m.5 7 5.500-6 5.500 6" /></svg>
        <svg viewBox="0 0 14 18" className="ml-[14px] h-[18px] w-[14px]" fill="none" stroke="#ddd"><path d="M1 4.500h8v9H1ZM9 7l3-2v8l-3-2M2 2q3-2 6 0M2 16q3 2 6 0" /></svg>
        <svg viewBox="0 0 16 16" className="ml-[13px] size-4" fill="none" stroke="#bbb" strokeWidth="1.200"><path d="M1 15Q1 1 15 1M4.500 15Q4.500 5 15 5M8 15q0-6 7-6" /><circle cx="13" cy="13.500" r="1.800" fill="#fff" stroke="none" /></svg>
        <svg viewBox="0 0 18 11" className="ml-[10px] h-[11px] w-[18px]" fill="none" stroke="#fff"><path d="M.5.5h15v10H.5ZM17 3v5" /><path d="M2 2h3v7H2Z" fill="#fff" stroke="none" /></svg>
        <svg viewBox="0 0 18 16" className="ml-2 h-4 w-[18px]" fill="none" stroke="#ccc"><path d="M1 5.500h2.500L7 2v12l-3.500-3.500H1ZM9.500 5.500q2 2.500 0 5M12 3.500q3.500 4.500 0 9M14.500 1.500q5 6.500 0 13" /></svg>
        <span className="ml-[13px]">ENG</span>
        <span className="ml-[15px]">13:12</span>
        <svg viewBox="0 0 18 18" className="ml-[22px] size-[18px]" fill="#fff"><path d="M0 0h18v14h-7l-2 3-2-3H0Z" /><path d="M4 5h10M4 9h7" stroke="#222" strokeWidth="1.300" /></svg>
        <span className="ml-[25px] mr-[5px] h-[35px] w-px bg-[#565b63]" />
      </div>
    </footer>
  );
}

export default function App() {
  return (
    <div className="flex h-screen w-full flex-col overflow-hidden bg-white">
      <Browser />
      <div className="flex min-h-0 flex-1 font-[Lato,sans-serif]">
        <div className="flex min-w-0 flex-1 flex-col">
          <Header />
          <div className="flex min-h-0 flex-1">
            <Sidebar />
            <Report />
          </div>
        </div>
        <ScrollRail />
      </div>
      <Taskbar />
    </div>
  );
}
